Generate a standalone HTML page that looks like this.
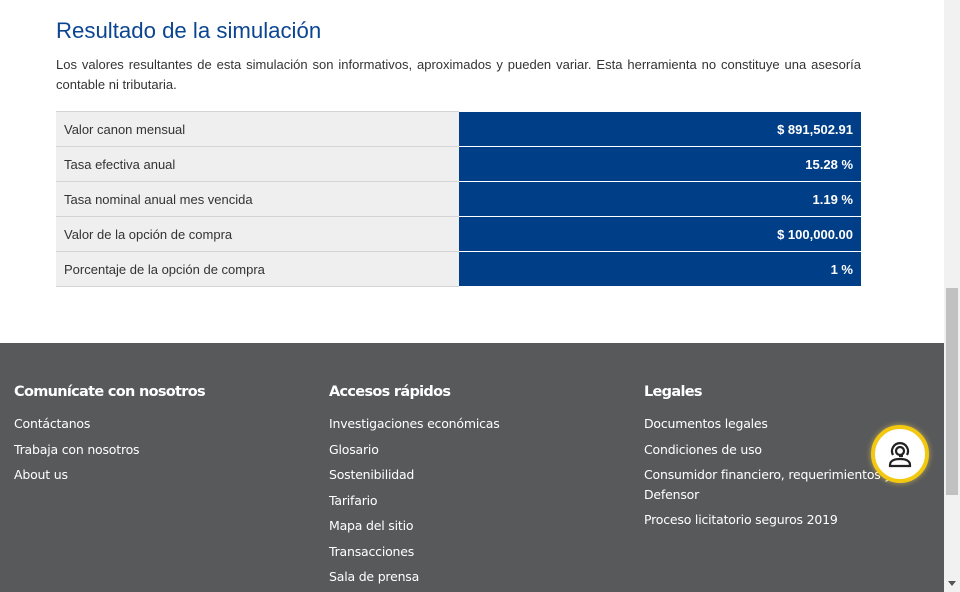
<!DOCTYPE html>
<html><head><meta charset="utf-8"><style>
*{margin:0;padding:0;box-sizing:border-box}
body{width:960px;height:592px;overflow:hidden;background:#fff;position:relative;font-family:"Liberation Sans",sans-serif}
h1{position:absolute;left:56px;top:18px;font-size:22.2px;font-weight:normal;color:#0b4592}
p.d{position:absolute;left:56px;top:55px;width:805px;font-size:13px;line-height:20px;color:#333;text-align:justify}
table{position:absolute;left:56px;top:111px;width:805px;border-collapse:collapse;font-size:13px}
td{height:35px;border-top:1px solid #d4d4d4;border-bottom:1px solid #d4d4d4;padding:0}
td.l{background:#efefef;color:#333;padding-left:8px;width:403px}
td.v{background:#003f87;color:#fff;font-weight:bold;text-align:right;padding-right:8px;border-color:#fff}
footer{position:absolute;left:0;top:343px;width:944px;height:249px;background:#58595b;color:#fff;font-family:"DejaVu Sans",sans-serif}
.c{position:absolute;top:41px}
.c h3{font-size:14.5px;font-weight:bold;letter-spacing:-0.7px;margin-bottom:11px}
.c a{display:block;font-size:12.5px;line-height:25.5px;letter-spacing:-0.2px}
.sb{position:absolute;left:944px;top:0;width:16px;height:592px;background:#f1f1f1}
.th{position:absolute;left:946px;top:288px;width:12px;height:207px;background:#c1c1c1}
.fab{position:absolute;left:871px;top:425px;width:58px;height:58px;border-radius:50%;background:#fff;border:4px solid #f2c811;box-shadow:0 0 6px rgba(255,220,80,.6)}
</style></head><body>
<h1>Resultado de la simulación</h1>
<p class="d">Los valores resultantes de esta simulación son informativos, aproximados y pueden variar. Esta herramienta no constituye una asesoría contable ni tributaria.</p>
<table>
<tr><td class="l">Valor canon mensual</td><td class="v">$ 891,502.91</td></tr>
<tr><td class="l">Tasa efectiva anual</td><td class="v">15.28 %</td></tr>
<tr><td class="l">Tasa nominal anual mes vencida</td><td class="v">1.19 %</td></tr>
<tr><td class="l">Valor de la opción de compra</td><td class="v">$ 100,000.00</td></tr>
<tr><td class="l">Porcentaje de la opción de compra</td><td class="v">1 %</td></tr>
</table>
<footer>
<div class="c" style="left:14px"><h3>Comunícate con nosotros</h3><a>Contáctanos</a><a>Trabaja con nosotros</a><a>About us</a></div>
<div class="c" style="left:329px"><h3>Accesos rápidos</h3><a>Investigaciones económicas</a><a>Glosario</a><a>Sostenibilidad</a><a>Tarifario</a><a>Mapa del sitio</a><a>Transacciones</a><a>Sala de prensa</a></div>
<div class="c" style="left:644px;width:260px"><h3>Legales</h3><a>Documentos legales</a><a>Condiciones de uso</a><a style="line-height:20px;margin:3px 0 2px">Consumidor financiero, requerimientos y Defensor</a><a>Proceso licitatorio seguros 2019</a></div>
</footer>
<div class="fab"><svg width="50" height="50" viewBox="0 0 50 50" style="position:absolute;left:0;top:0"><g fill="none" stroke="#222" stroke-width="2.2"><path d="M18 26a8 8 0 1 1 14 0"/><circle cx="25" cy="22" r="4"/><path d="M24 27h4"/><path d="M15 36c0-4 4-6 10-6s10 2 10 6v1H15z"/></g></svg></div>
<div class="sb"></div><div class="th"></div>
<div style="position:absolute;left:948px;top:581px;border-left:4px solid transparent;border-right:4px solid transparent;border-top:5px solid #555"></div>
</body></html>
